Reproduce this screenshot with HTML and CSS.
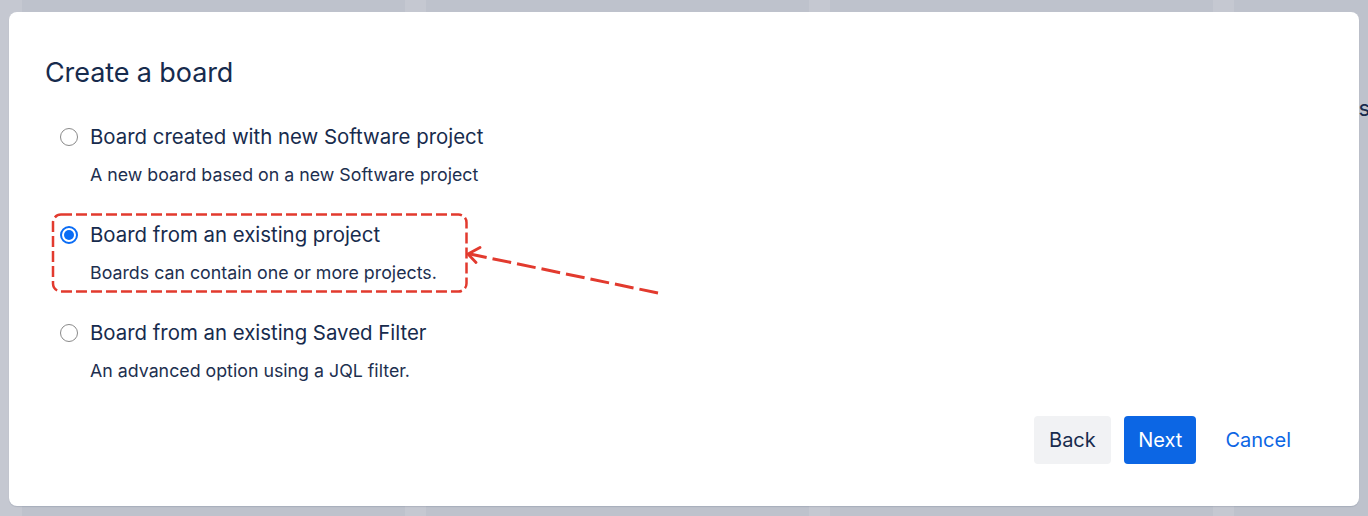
FILE: index.html
```html
<!DOCTYPE html>
<html lang="en">
<head>
<meta charset="utf-8">
<title>Create a board</title>
<link rel="stylesheet" href="styles.css">
</head>
<body>
  <div class="board">
    <div class="board-col"></div>
    <div class="board-col"></div>
    <div class="board-col"></div>
    <div class="board-col board-col-last"><span class="col-title">Columns</span></div>
  </div>

  <div class="modal" role="dialog" aria-labelledby="modal-title">
    <h1 class="modal-title" id="modal-title">Create a board</h1>

    <ul class="options">
      <li class="option">
        <span class="radio"></span>
        <span class="option-label">Board created with new Software project</span>
        <span class="option-desc">A new board based on a new Software project</span>
      </li>
      <li class="option">
        <span class="radio radio-checked"></span>
        <span class="option-label">Board from an existing project</span>
        <span class="option-desc">Boards can contain one or more projects.</span>
      </li>
      <li class="option">
        <span class="radio"></span>
        <span class="option-label">Board from an existing Saved Filter</span>
        <span class="option-desc">An advanced option using a JQL filter.</span>
      </li>
    </ul>

    <div class="modal-footer">
      <button class="btn btn-default" type="button">Back</button>
      <button class="btn btn-primary" type="button">Next</button>
      <button class="btn btn-link" type="button">Cancel</button>
    </div>
  </div>

  <svg class="callout" width="1368" height="516" viewBox="0 0 1368 516" aria-hidden="true">
    <rect x="53" y="214.5" width="413.5" height="77" rx="8" ry="8" class="callout-box"/>
    <line x1="658" y1="293" x2="470" y2="254" class="callout-line"/>
    <polyline points="480,247.5 468,254 476,262.5" class="callout-head"/>
  </svg>
</body>
</html>
```

FILE: styles.css
```css
* {
  box-sizing: border-box;
}

html,
body {
  margin: 0;
  padding: 0;
}

body {
  width: 1368px;
  height: 516px;
  overflow: hidden;
  position: relative;
  background: #c5c8d1;
  font-family: Inter, "Liberation Sans", Arial, sans-serif;
  color: #172b4d;
}

/* dimmed board behind the dialog */
.board {
  display: flex;
  gap: 21px;
  height: 100%;
  padding-left: 22px;
}

.board-col {
  width: 383px;
  flex: none;
  background: #bec2cc;
}

.board-col-last {
  width: 140px;
  display: flex;
  justify-content: flex-end;
  padding-top: 94px;
}

.col-title {
  font-size: 22px;
  line-height: 28px;
  color: #172b4d;
  white-space: nowrap;
  margin-right: 4px;
}

/* dialog */
.modal {
  position: absolute;
  left: 9px;
  top: 12px;
  width: 1350px;
  height: 494px;
  background: #ffffff;
  border-radius: 8px;
  box-shadow: 0 1px 1px rgba(9, 30, 66, 0.12);
  padding: 45px 54px 0 36px;
  display: flex;
  flex-direction: column;
}

.modal-title {
  margin: 0;
  font-size: 27px;
  line-height: 32px;
  font-weight: 400;
  color: #172b4d;
  letter-spacing: -0.1px;
}

.options {
  list-style: none;
  margin: 36px 0 0 15px;
  padding: 0;
  display: flex;
  flex-direction: column;
  gap: 36px;
}

.option {
  display: grid;
  grid-template-columns: 30px auto;
  grid-template-rows: 24px 24px;
  row-gap: 14px;
  align-items: center;
}

.radio {
  grid-column: 1;
  grid-row: 1;
  width: 18px;
  height: 18px;
  border-radius: 50%;
  border: 1.5px solid #8a8a8a;
  background: #ffffff;
  display: flex;
  align-items: center;
  justify-content: center;
}

.radio-checked {
  border: 2px solid #0a6cf5;
}

.radio-checked::after {
  content: "";
  width: 10px;
  height: 10px;
  border-radius: 50%;
  background: #0a6cf5;
}

.option-label {
  grid-column: 2;
  grid-row: 1;
  font-size: 20.4px;
  line-height: 24px;
  white-space: nowrap;
}

.option-desc {
  grid-column: 2;
  grid-row: 2;
  font-size: 17.8px;
  line-height: 24px;
  white-space: nowrap;
  color: #1d2f4f;
}

.modal-footer {
  margin-top: 33px;
  display: flex;
  justify-content: flex-end;
  gap: 13px;
}

.btn {
  height: 48px;
  padding: 0 14px;
  border: none;
  border-radius: 4px;
  font-family: inherit;
  font-size: 20px;
  line-height: 48px;
  cursor: pointer;
}

.btn-default {
  background: #f1f2f4;
  color: #172b4d;
  padding: 0 15.5px;
}

.btn-primary {
  background: #0c66e4;
  color: #ffffff;
}

.btn-link {
  background: transparent;
  color: #0c66e4;
  margin-left: 2px;
}

/* red dashed annotation drawn over the dialog */
.callout {
  position: absolute;
  left: 0;
  top: 0;
  pointer-events: none;
}

.callout-box {
  fill: none;
  stroke: #e23a2e;
  stroke-width: 2.5;
  stroke-dasharray: 11 4;
}

.callout-line {
  stroke: #e23a2e;
  stroke-width: 3;
  stroke-dasharray: 19 6;
}

.callout-head {
  fill: none;
  stroke: #e23a2e;
  stroke-width: 2.8;
  stroke-linecap: round;
  stroke-linejoin: round;
}
```
